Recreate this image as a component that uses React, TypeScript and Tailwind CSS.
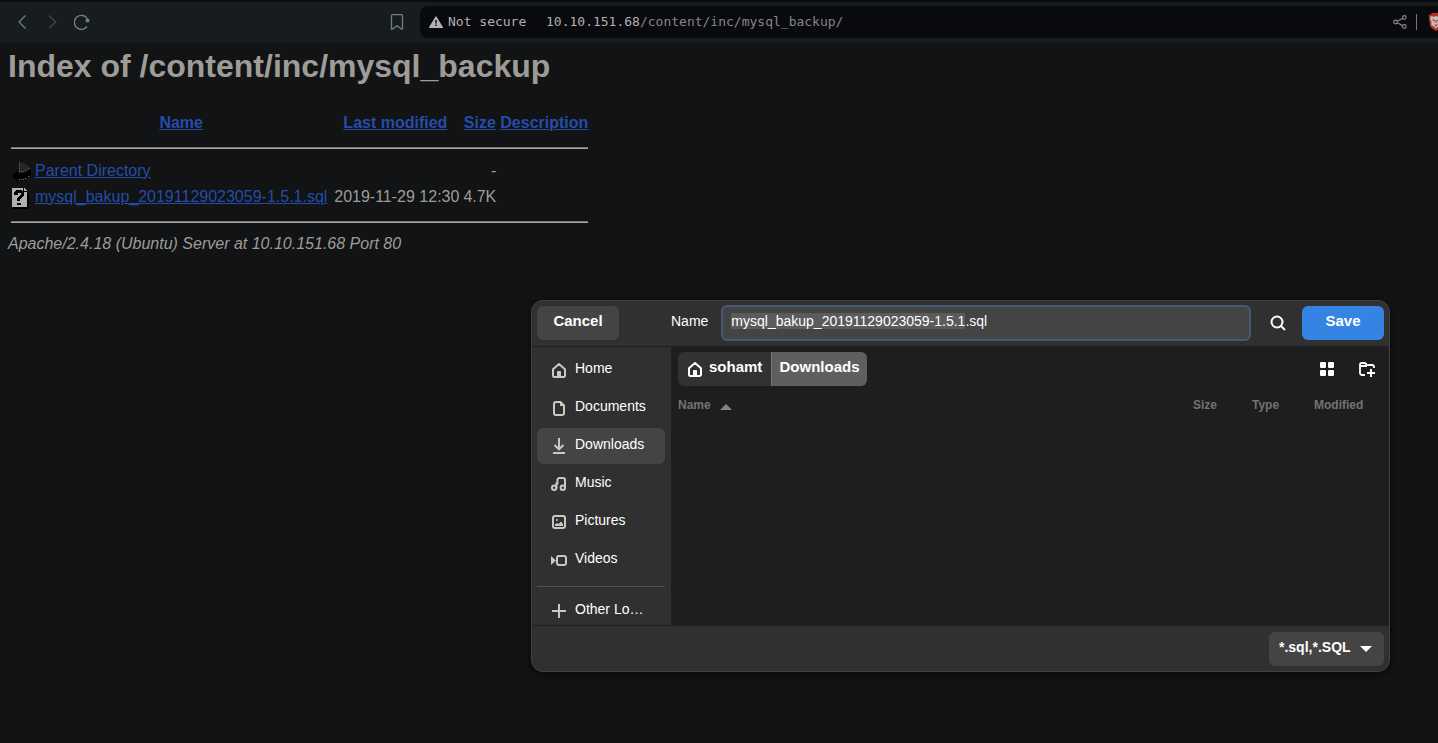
import { useEffect, useRef } from "react";
import type { ReactNode } from "react";

const FILE = "mysql_bakup_20191129023059-1.5.1.sql";

function Icon({ children, className = "" }: { children: ReactNode; className?: string }) {
  return (
    <svg
      viewBox="0 0 16 16"
      className={"h-4 w-4 shrink-0 " + className}
      fill="none"
      stroke="currentColor"
      strokeWidth="2"
      aria-hidden="true"
    >
      {children}
    </svg>
  );
}

const HomeIcon = () => (
  <Icon>
    <path d="M2 7.3 8 2l6 5.300V13.500a1.500 1.500 0 0 1-1.500 1.500h-9A1.500 1.500 0 0 1 2 13.500z" strokeLinejoin="round" />
    <path d="M6 15V10a1 1 0 0 1 1-1h2a1 1 0 0 1 1 1v5z" fill="currentColor" stroke="none" />
  </Icon>
);

const places: { label: string; icon: ReactNode; active?: boolean }[] = [
  { label: "Home", icon: <HomeIcon /> },
  {
    label: "Documents",
    icon: (
      <Icon>
        <path d="M5 2h4.500L13 5.500V13a2 2 0 0 1-2 2H5a2 2 0 0 1-2-2V4a2 2 0 0 1 2-2z" />
        <path d="M9 1.500V6h4.500z" fill="currentColor" stroke="none" />
      </Icon>
    ),
  },
  {
    label: "Downloads",
    active: true,
    icon: (
      <Icon>
        <path d="M8 0v11M3.500 7 8 11.300 12.500 7M2 15h12" />
      </Icon>
    ),
  },
  {
    label: "Music",
    icon: (
      <Icon>
        <circle cx="3.200" cy="11.800" r="2.200" />
        <circle cx="11.800" cy="11.800" r="2.200" />
        <path d="M5.400 12V7.500h2M6.400 8V4a2 2 0 0 1 2-2H12a2 2 0 0 1 2 2v8" />
      </Icon>
    ),
  },
  {
    label: "Pictures",
    icon: (
      <Icon>
        <rect x="2" y="2" width="12" height="12" rx="2" />
        <path d="M4 12V10.500L6 9l1.500 1L10 7.500l2 2.500v2z" fill="currentColor" stroke="none" />
        <circle cx="6" cy="6" r="1" fill="currentColor" stroke="none" />
      </Icon>
    ),
  },
  {
    label: "Videos",
    icon: (
      <Icon>
        <rect x="6" y="4" width="9" height="9" rx="2" />
        <path d="M0 4v9l5-4.500z" fill="currentColor" stroke="none" />
      </Icon>
    ),
  },
];

function BrowserBar() {
  return (
    <header className="flex h-[43px] items-center border-t-2 border-[#0b0c0f] bg-[#171c1e] pb-px font-['DejaVu_Sans_Mono',monospace] text-[13px]">
      <nav className="flex w-[420px] shrink-0 items-center pl-[14px] text-[#737d83]">
        <button aria-label="Back" className="mr-[14px]">
          <svg viewBox="0 0 16 16" className="h-4 w-4" fill="none" stroke="currentColor" strokeWidth="1.3">
            <path d="M11.500 1.500 5 8l6.500 6.500" />
          </svg>
        </button>
        <button aria-label="Forward" className="mr-[14px] text-[#3f474b]">
          <svg viewBox="0 0 16 16" className="h-4 w-4" fill="none" stroke="currentColor" strokeWidth="1.3">
            <path d="M5 1.500 11.500 8 5 14.500" />
          </svg>
        </button>
        <button aria-label="Reload">
          <svg viewBox="0 0 16 16" className="h-4 w-4" fill="none" stroke="currentColor" strokeWidth="1.4">
            <path d="M13.500 5A7 7 0 1 0 13 12.500" />
            <circle cx="13.500" cy="6.500" r="2" fill="currentColor" stroke="none" />
          </svg>
        </button>
        <button aria-label="Bookmark" className="ml-auto mr-[15px]">
          <svg viewBox="0 0 16 16" className="h-4 w-4" fill="none" stroke="currentColor" strokeWidth="1.3">
            <path d="M3.500.700h9a1 1 0 0 1 1 1V15h-1L8 11.800 3.500 15h-1V1.700a1 1 0 0 1 1-1z" />
          </svg>
        </button>
      </nav>
      <div className="flex h-8 min-w-0 flex-1 items-center overflow-hidden rounded-l-lg bg-[#090a0d] pl-[9px] text-[#b0b0b0]">
        <svg viewBox="0 0 14 12" className="h-3 w-[14px] shrink-0" aria-hidden="true">
          <path d="M7 1 13.300 11.300H.700z" fill="#b2b2b2" stroke="#b2b2b2" strokeLinejoin="round" strokeWidth="1.400" />
          <path d="M7 4v3.500M7 8.500v1.500" stroke="#090a0d" strokeWidth="1.500" />
        </svg>
        <span className="ml-[5px] w-[98px] shrink-0 whitespace-nowrap">Not secure</span>
        <span className="min-w-0 flex-1 truncate">
          10.10.151.68<span className="text-[#858687]">/content/inc/mysql_backup/</span>
        </span>
        <button aria-label="Share">
          <svg viewBox="0 0 14 14" className="h-[14px] w-[14px]" fill="none" stroke="#858585" strokeWidth="1.2">
            <circle cx="2.500" cy="7" r="1.800" />
            <circle cx="11.300" cy="2.500" r="1.800" />
            <circle cx="11.300" cy="11.500" r="1.800" />
            <path d="M4.200 6.200 9.600 3.400M4.200 7.800l5.400 2.800" />
          </svg>
        </button>
        <span className="ml-[9px] mr-[11px] h-4 w-px bg-[#77787a]" />
        <button aria-label="Brave Shields" className="-mr-[6px] shrink-0">
          <svg viewBox="0 0 16 18" className="h-[18px] w-4">
            <path d="M4 0h8l1.500 1.500 2 .500L15 6l-1 7-2 2.500L8 18l-4-2.500L2 13 1 6 .500 2l2-.500z" fill="#b5301b" />
            <path d="m3 3 3 .700 2-.700 2 .700L13 3l1 2.500-1.500 4 .500 2-2 1.500L8 15.500 5 13l-2-1.500.500-2L2 5.500z" fill="#c0c0c0" />
            <path d="m4 6 3 1-1 2zM12 6 9 7l1 2zM6 11l2 1 2-1-2 3zM7.500 7h1v3h-1z" fill="#b5301b" />
          </svg>
        </button>
      </div>
    </header>
  );
}

const link = "text-[#264ca8] underline";

function RuleRow() {
  return (
    <tr>
      <td colSpan={5} className="h-5 p-px">
        <hr className="h-[2px] border-t border-b border-t-[#777777] border-b-[#a7a7a7]" />
      </td>
    </tr>
  );
}

function Listing() {
  return (
    <main className="px-2 pt-[5px] text-base/[18px] text-[#9f9c98]">
      <h1 className="text-[32px]/[37px] font-bold">Index of /content/inc/mysql_backup</h1>
      <table className="mt-[21px] border-separate border-spacing-[2px]">
        <thead>
          <tr className="h-7 font-bold">
            <th className="w-[22px] p-px" aria-label="Type" />
            <th className="p-px pt-[3px]"><a href="?C=N;O=D" className={link}>Name</a></th>
            <th className="w-[130px] p-px pt-[3px]"><a href="?C=M;O=A" className={link}>Last modified</a></th>
            <th className="p-px pt-[3px]"><a href="?C=S;O=A" className={link}>Size</a></th>
            <th className="p-px pt-[3px]"><a href="?C=D;O=A" className={link}>Description</a></th>
          </tr>
        </thead>
        <tbody>
          <RuleRow />
          <tr className="h-6 align-top">
            <td className="p-px">
              <svg viewBox="0 0 20 22" className="h-[22px] w-5" shapeRendering="crispEdges" aria-hidden="true">
                <path d="M8 2h5l5 3 2 3-3 2-8 1z" fill="#252627" />
                <path d="M0 15 7 10v3l7-1 5-4h1v6l-4 3-9 1v3z" fill="#000" />
                <path d="M8.500 1v9M8 10.500h5l4-2 2-2M8 18.500h5l4-2 2-2" fill="none" stroke="#666" strokeDasharray="1 1" />
              </svg>
            </td>
            <td className="p-px pt-[2px]"><a href="/content/inc/" className={link}>Parent Directory</a></td>
            <td className="p-px pt-[2px]" />
            <td className="p-px pt-[2px] text-right">-</td>
            <td className="p-px pt-[2px]" />
          </tr>
          <tr className="h-6 align-top">
            <td className="p-px">
              <svg viewBox="0 0 20 22" className="h-[22px] w-5" shapeRendering="crispEdges" aria-hidden="true">
                <path d="M2 2h14v4h2v16H2z" fill="#000" />
                <path d="M1 1h11v4h4v15H1z" fill="#b0b0b0" />
                <path d="M13 1v3h3z" fill="#b0b0b0" />
                <path d="M3 8V5l2-2h5l3 2v4l-4 3v2H6v-3l4-3V6H7v2zM6 16h4v2H6z" fill="#000" />
              </svg>
            </td>
            <td className="p-px pt-[2px]"><a href={FILE} className={link}>{FILE}</a></td>
            <td className="whitespace-nowrap p-px pt-[2px] text-right">2019-11-29 12:30</td>
            <td className="p-px pt-[2px] text-right">4.7K</td>
            <td className="p-px pt-[2px]" />
          </tr>
          <RuleRow />
        </tbody>
      </table>
      <address className="pt-px">Apache/2.4.18 (Ubuntu) Server at 10.10.151.68 Port 80</address>
    </main>
  );
}

function SaveDialog() {
  const nameRef = useRef<HTMLInputElement>(null);
  useEffect(() => {
    nameRef.current?.focus();
    nameRef.current?.setSelectionRange(0, FILE.lastIndexOf("."));
  }, []);

  return (
    <div
      role="dialog"
      aria-label="Save file"
      className="absolute right-12 top-[300px] w-[859px] overflow-hidden rounded-xl border border-[#414141] bg-[#303030] text-sm text-white shadow-[0_2px_10px_rgba(0,0,0,0.6)]"
    >
      <div className="flex h-[46px] items-center border-b border-[#202020] px-[5px] pb-px">
        <button className="h-[34px] w-[82px] rounded-md bg-[#444444] pb-1 text-[15px] font-bold">Cancel</button>
        <label htmlFor="filename" className="ml-[52px] mr-[13px] pb-1">Name</label>
        <input
          id="filename"
          ref={nameRef}
          defaultValue={FILE}
          className="h-9 min-w-0 flex-1 rounded-md border-2 border-[#465a78] bg-[#444444] px-2 pb-1 caret-transparent outline-none selection:bg-[#5b5b5b] selection:text-white"
        />
        <button aria-label="Search" className="ml-[19px] mr-4">
          <Icon>
            <circle cx="7" cy="7" r="5.500" />
            <path d="m11 11 4 4" />
          </Icon>
        </button>
        <button className="h-[34px] w-[82px] rounded-md bg-[#3584e4] pb-1 text-[15px] font-bold">Save</button>
      </div>

      <div className="flex h-[278px]">
        <aside className="w-[139px] shrink-0 overflow-hidden pl-[5px] pr-[6px] pt-[5px]">
          <ul className="flex flex-col gap-[2px]">
            {places.map((p) => (
              <li key={p.label}>
                <button
                  className={
                    "flex h-9 w-full items-center gap-2 rounded-md pl-[14px] " + (p.active ? "bg-[#444444]" : "")
                  }
                >
                  <span className="text-[#c8c8c8]">{p.icon}</span>
                  <span className="pb-1">{p.label}</span>
                </button>
              </li>
            ))}
          </ul>
          <hr className="mt-2 mb-[6px] border-[#505050]" />
          <button className="flex h-9 w-full items-center gap-2 pl-[14px] text-left">
            <span className="text-[#c8c8c8]">
              <Icon>
                <path d="M8 1v14M1 8h14" />
              </Icon>
            </span>
            <span className="whitespace-nowrap pb-1">Other Lo…</span>
          </button>
        </aside>

        <section className="min-w-0 flex-1 bg-[#1e1e1e] px-[7px] pt-[5px]">
          <div className="flex items-center">
            <div className="flex h-[34px] overflow-hidden rounded-md text-[15px] font-bold">
              <button className="flex w-[93px] items-center gap-[6px] bg-[#323232] pl-[9px]">
                <HomeIcon />
                <span className="pb-1">sohamt</span>
              </button>
              <button className="w-24 border-l border-[#757575] bg-[#5f5f5f] pb-1">Downloads</button>
            </div>
            <button aria-label="Grid view" className="ml-auto mr-6">
              <Icon>
                <path
                  d="M2 1h4a1 1 0 0 1 1 1v4a1 1 0 0 1-1 1H2a1 1 0 0 1-1-1V2a1 1 0 0 1 1-1zM10 1h4a1 1 0 0 1 1 1v4a1 1 0 0 1-1 1h-4a1 1 0 0 1-1-1V2a1 1 0 0 1 1-1zM2 9h4a1 1 0 0 1 1 1v4a1 1 0 0 1-1 1H2a1 1 0 0 1-1-1v-4a1 1 0 0 1 1-1zM10 9h4a1 1 0 0 1 1 1v4a1 1 0 0 1-1 1h-4a1 1 0 0 1-1-1v-4a1 1 0 0 1 1-1z"
                  fill="currentColor"
                  stroke="none"
                />
              </Icon>
            </button>
            <button aria-label="New folder" className="mr-[7px]">
              <Icon>
                <path d="M6 14H3a2 2 0 0 1-2-2V3.500A1.500 1.500 0 0 1 2.500 2H6l2 2h5a2 2 0 0 1 2 2v1M1 5h7" strokeWidth="1.8" />
                <path d="M12 8v8M8 12h8" />
              </Icon>
            </button>
          </div>
          <table className="mt-[11px] w-full table-fixed text-left text-xs/4 text-[#737373]">
            <thead>
              <tr>
                <th className="p-0">
                  <span className="flex items-center gap-[9px]">
                    Name
                    <svg viewBox="0 0 12 6" className="mt-1 h-[6px] w-3" aria-hidden="true">
                      <path d="M0 6 6 0l6 6z" fill="#828282" />
                    </svg>
                  </span>
                </th>
                <th className="w-[59px] p-0">Size</th>
                <th className="w-[62px] p-0">Type</th>
                <th className="w-[68px] p-0">Modified</th>
              </tr>
            </thead>
          </table>
        </section>
      </div>

      <div className="flex h-[46px] items-center justify-end border-t border-[#202020] px-[5px]">
        <div className="relative">
          <select
            aria-label="File type"
            className="h-[34px] w-[115px] appearance-none rounded-md bg-[#444444] pb-1 pl-[10px] text-sm font-bold outline-none"
          >
            <option>*.sql,*.SQL</option>
          </select>
          <svg viewBox="0 0 12 6" className="pointer-events-none absolute right-3 top-[14px] h-[6px] w-3" aria-hidden="true">
            <path d="M0 0h12L6 6z" fill="#fff" />
          </svg>
        </div>
      </div>
    </div>
  );
}

export default function App() {
  return (
    <div className="relative min-h-screen bg-[#111314] font-['Liberation_Sans',Arial,sans-serif]">
      <BrowserBar />
      <Listing />
      <SaveDialog />
    </div>
  );
}
